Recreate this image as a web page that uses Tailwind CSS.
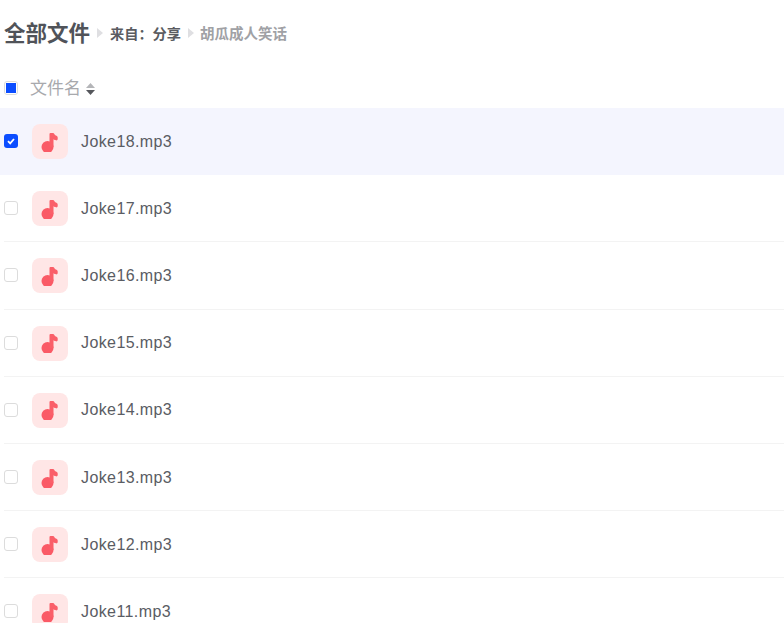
<!DOCTYPE html>
<html lang="zh-CN">
<head>
    <meta charset="UTF-8">
    <title>全部文件</title>
    <script src="https://cdn.jsdelivr.net/npm/@tailwindcss/browser@4"></script>
</head>
<body class="bg-white overflow-hidden h-[623px] font-['Liberation_Sans','Noto_Sans_CJK_SC',sans-serif] text-[#4e5056]">
    <!-- Breadcrumb -->
    <div class="flex items-center h-[67px] pl-1 pt-[1px]">
        <span class="text-[21.5px] font-bold text-[#505359]">全部文件</span>
        <svg class="w-[6px] h-[10px] ml-[7px] mr-[7px] -mt-[2px]" viewBox="0 0 6 10"><path d="M0 0l6 5-6 5z" fill="#dfdfe2"/></svg>
        <span class="text-[14.2px] font-bold text-[#5a5c61] mt-[2px]">来自：分享</span>
        <svg class="w-[6px] h-[10px] ml-[7px] mr-[6px] -mt-[2px]" viewBox="0 0 6 10"><path d="M0 0l6 5-6 5z" fill="#dfdfe2"/></svg>
        <span class="text-[14.5px] font-bold text-[#a0a1a5] mt-[2px]">胡瓜成人笑话</span>
    </div>

    <!-- Table header -->
    <div class="flex items-center h-[41px] pl-1">
        <span class="flex items-center justify-center w-[14px] h-[14px] border border-[#dcdcdc] rounded-[3px]">
            <span class="w-[10px] h-[10px] bg-[#0b4dff]"></span>
        </span>
        <span class="ml-3 text-[17px] text-[#a8a9ad] mt-[3px]">文件名</span>
        <svg class="w-[9px] h-[12px] ml-[5px] mt-[2px]" viewBox="0 0 9 12"><path d="M4.500 0L9 5H0z" fill="#b4b5b8"/><path d="M4.500 12L0 7h9z" fill="#55575c"/></svg>
    </div>

    <!-- File rows -->
    <div>
        <div class="flex items-center h-[67.2px] pl-1 bg-[#f4f5fe]">
            <span class="flex items-center justify-center w-[14px] h-[14px] bg-[#0b4dff] rounded-[3px] -mt-px">
                <svg class="w-[10px] h-[10px]" viewBox="0 0 10 10"><path d="M2 5.200l2.200 2.200L8 3" fill="none" stroke="#fff" stroke-width="1.800"/></svg>
            </span>
            <span class="flex items-center justify-center ml-[14px] w-9 h-[35px] rounded-[8px] bg-[#ffe6e6]">
                <svg class="w-5 h-5" viewBox="0 0 20 20"><circle cx="7.500" cy="15" r="6" fill="#fa5a66"/><path d="M9.500 15V2a1 1 0 0 1 1-1h2.500c.6 0 1 .3 1.200.8.4 1 1.300 1.700 2.300 2 .8.300 1.200.900 1.200 1.700v1.500c0 1-.8 1.600-1.800 1.300-.8-.2-1.300-.4-2.400-1V15z" fill="#fa5f69"/></svg>
            </span>
            <span class="ml-[13px] text-[16px] tracking-[0.4px] text-[#5a5c63]">Joke18.mp3</span>
        </div>
        <div class="flex items-center h-[67.2px] pl-1 relative">
            <span class="w-[14px] h-[14px] border border-[#dcdcdc] rounded-[3px] bg-white -mt-px"></span>
            <span class="flex items-center justify-center ml-[14px] w-9 h-[35px] rounded-[8px] bg-[#ffe6e6]">
                <svg class="w-5 h-5" viewBox="0 0 20 20"><circle cx="7.500" cy="15" r="6" fill="#fa5a66"/><path d="M9.500 15V2a1 1 0 0 1 1-1h2.500c.6 0 1 .3 1.200.8.4 1 1.300 1.700 2.300 2 .8.300 1.200.900 1.200 1.700v1.500c0 1-.8 1.600-1.800 1.300-.8-.2-1.300-.4-2.400-1V15z" fill="#fa5f69"/></svg>
            </span>
            <span class="ml-[13px] text-[16px] tracking-[0.4px] text-[#5a5c63]">Joke17.mp3</span>
            <span class="absolute left-1 right-0 bottom-0 h-px bg-[#f3f3f3]"></span>
        </div>
        <div class="flex items-center h-[67.2px] pl-1 relative">
            <span class="w-[14px] h-[14px] border border-[#dcdcdc] rounded-[3px] bg-white -mt-px"></span>
            <span class="flex items-center justify-center ml-[14px] w-9 h-[35px] rounded-[8px] bg-[#ffe6e6]">
                <svg class="w-5 h-5" viewBox="0 0 20 20"><circle cx="7.500" cy="15" r="6" fill="#fa5a66"/><path d="M9.500 15V2a1 1 0 0 1 1-1h2.500c.6 0 1 .3 1.200.8.4 1 1.300 1.700 2.300 2 .8.300 1.200.900 1.200 1.700v1.500c0 1-.8 1.600-1.800 1.300-.8-.2-1.300-.4-2.400-1V15z" fill="#fa5f69"/></svg>
            </span>
            <span class="ml-[13px] text-[16px] tracking-[0.4px] text-[#5a5c63]">Joke16.mp3</span>
            <span class="absolute left-1 right-0 bottom-0 h-px bg-[#f3f3f3]"></span>
        </div>
        <div class="flex items-center h-[67.2px] pl-1 relative">
            <span class="w-[14px] h-[14px] border border-[#dcdcdc] rounded-[3px] bg-white -mt-px"></span>
            <span class="flex items-center justify-center ml-[14px] w-9 h-[35px] rounded-[8px] bg-[#ffe6e6]">
                <svg class="w-5 h-5" viewBox="0 0 20 20"><circle cx="7.500" cy="15" r="6" fill="#fa5a66"/><path d="M9.500 15V2a1 1 0 0 1 1-1h2.500c.6 0 1 .3 1.200.8.4 1 1.300 1.700 2.300 2 .8.300 1.200.900 1.200 1.700v1.500c0 1-.8 1.600-1.800 1.300-.8-.2-1.300-.4-2.400-1V15z" fill="#fa5f69"/></svg>
            </span>
            <span class="ml-[13px] text-[16px] tracking-[0.4px] text-[#5a5c63]">Joke15.mp3</span>
            <span class="absolute left-1 right-0 bottom-0 h-px bg-[#f3f3f3]"></span>
        </div>
        <div class="flex items-center h-[67.2px] pl-1 relative">
            <span class="w-[14px] h-[14px] border border-[#dcdcdc] rounded-[3px] bg-white -mt-px"></span>
            <span class="flex items-center justify-center ml-[14px] w-9 h-[35px] rounded-[8px] bg-[#ffe6e6]">
                <svg class="w-5 h-5" viewBox="0 0 20 20"><circle cx="7.500" cy="15" r="6" fill="#fa5a66"/><path d="M9.500 15V2a1 1 0 0 1 1-1h2.500c.6 0 1 .3 1.200.8.4 1 1.300 1.700 2.300 2 .8.300 1.200.900 1.200 1.700v1.500c0 1-.8 1.600-1.800 1.300-.8-.2-1.300-.4-2.400-1V15z" fill="#fa5f69"/></svg>
            </span>
            <span class="ml-[13px] text-[16px] tracking-[0.4px] text-[#5a5c63]">Joke14.mp3</span>
            <span class="absolute left-1 right-0 bottom-0 h-px bg-[#f3f3f3]"></span>
        </div>
        <div class="flex items-center h-[67.2px] pl-1 relative">
            <span class="w-[14px] h-[14px] border border-[#dcdcdc] rounded-[3px] bg-white -mt-px"></span>
            <span class="flex items-center justify-center ml-[14px] w-9 h-[35px] rounded-[8px] bg-[#ffe6e6]">
                <svg class="w-5 h-5" viewBox="0 0 20 20"><circle cx="7.500" cy="15" r="6" fill="#fa5a66"/><path d="M9.500 15V2a1 1 0 0 1 1-1h2.500c.6 0 1 .3 1.200.8.4 1 1.300 1.700 2.300 2 .8.300 1.200.900 1.200 1.700v1.500c0 1-.8 1.600-1.800 1.300-.8-.2-1.300-.4-2.400-1V15z" fill="#fa5f69"/></svg>
            </span>
            <span class="ml-[13px] text-[16px] tracking-[0.4px] text-[#5a5c63]">Joke13.mp3</span>
            <span class="absolute left-1 right-0 bottom-0 h-px bg-[#f3f3f3]"></span>
        </div>
        <div class="flex items-center h-[67.2px] pl-1 relative">
            <span class="w-[14px] h-[14px] border border-[#dcdcdc] rounded-[3px] bg-white -mt-px"></span>
            <span class="flex items-center justify-center ml-[14px] w-9 h-[35px] rounded-[8px] bg-[#ffe6e6]">
                <svg class="w-5 h-5" viewBox="0 0 20 20"><circle cx="7.500" cy="15" r="6" fill="#fa5a66"/><path d="M9.500 15V2a1 1 0 0 1 1-1h2.500c.6 0 1 .3 1.200.8.4 1 1.300 1.700 2.300 2 .8.300 1.200.900 1.200 1.700v1.500c0 1-.8 1.600-1.800 1.300-.8-.2-1.300-.4-2.400-1V15z" fill="#fa5f69"/></svg>
            </span>
            <span class="ml-[13px] text-[16px] tracking-[0.4px] text-[#5a5c63]">Joke12.mp3</span>
            <span class="absolute left-1 right-0 bottom-0 h-px bg-[#f3f3f3]"></span>
        </div>
        <div class="flex items-center h-[67.2px] pl-1 relative">
            <span class="w-[14px] h-[14px] border border-[#dcdcdc] rounded-[3px] bg-white -mt-px"></span>
            <span class="flex items-center justify-center ml-[14px] w-9 h-[35px] rounded-[8px] bg-[#ffe6e6]">
                <svg class="w-5 h-5" viewBox="0 0 20 20"><circle cx="7.500" cy="15" r="6" fill="#fa5a66"/><path d="M9.500 15V2a1 1 0 0 1 1-1h2.500c.6 0 1 .3 1.200.8.4 1 1.300 1.700 2.300 2 .8.300 1.200.900 1.200 1.700v1.500c0 1-.8 1.600-1.800 1.300-.8-.2-1.300-.4-2.400-1V15z" fill="#fa5f69"/></svg>
            </span>
            <span class="ml-[13px] text-[16px] tracking-[0.4px] text-[#5a5c63]">Joke11.mp3</span>
        </div>
    </div>
</body>
</html>
